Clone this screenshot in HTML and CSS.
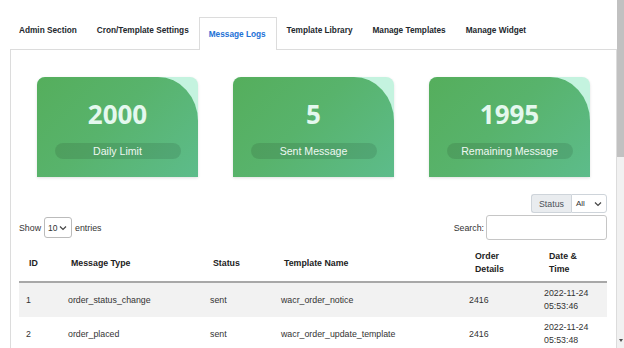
FILE: index.html
```html
<!DOCTYPE html>
<html lang="en">
<head>
<meta charset="utf-8">
<title>Message Logs</title>
<link rel="stylesheet" href="styles.css">
</head>
<body>
<div class="screen">
  <div class="page">
    <nav class="tabs">
      <a class="tab">Admin Section</a>
      <a class="tab">Cron/Template Settings</a>
      <a class="tab active">Message Logs</a>
      <a class="tab">Template Library</a>
      <a class="tab">Manage Templates</a>
      <a class="tab">Manage Widget</a>
    </nav>
    <section class="panel">
      <div class="cards">
        <div class="card"><div class="card-body"><div class="num">2000</div><div class="pill">Daily Limit</div></div></div>
        <div class="card"><div class="card-body"><div class="num">5</div><div class="pill">Sent Message</div></div></div>
        <div class="card"><div class="card-body"><div class="num">1995</div><div class="pill">Remaining Message</div></div></div>
      </div>
      <div class="logs">
        <div class="filter-row">
          <div class="input-group">
            <span class="addon">Status</span>
            <span class="select sel-all">All<svg class="chev" width="8" height="6" viewBox="0 0 8 6"><polyline points="1,1.5 4,4.5 7,1.5" fill="none" stroke="#444" stroke-width="1.2"/></svg></span>
          </div>
        </div>
        <div class="length-row">
          <div class="length">Show <span class="select sel-len">10<svg class="chev" width="8" height="6" viewBox="0 0 8 6"><polyline points="1,1.5 4,4.5 7,1.5" fill="none" stroke="#444" stroke-width="1.2"/></svg></span> entries</div>
          <div class="search">Search:<span class="search-input"></span></div>
        </div>
        <table class="log-table">
          <colgroup>
            <col class="c-id"><col class="c-type"><col class="c-status"><col class="c-tpl"><col class="c-order"><col class="c-date">
          </colgroup>
          <thead>
            <tr><th>ID</th><th>Message Type</th><th>Status</th><th>Template Name</th><th class="h-order">Order<br>Details</th><th class="h-date">Date &amp;<br>Time</th></tr>
          </thead>
          <tbody>
            <tr class="odd"><td>1</td><td>order_status_change</td><td>sent</td><td>wacr_order_notice</td><td>2416</td><td>2022-11-24<br>05:53:46</td></tr>
            <tr><td>2</td><td>order_placed</td><td>sent</td><td>wacr_order_update_template</td><td>2416</td><td>2022-11-24<br>05:53:48</td></tr>
          </tbody>
        </table>
      </div>
    </section>
  </div>
  <div class="scrollbar"><div class="thumb"></div><div class="track"></div><div class="arrow"></div></div>
</div>
</body>
</html>
```

FILE: styles.css
```css
html, body {
  margin: 0;
  padding: 0;
  background: #fff;
  overflow: hidden;
  height: 348px;
}
.screen {
  display: flex;
  width: 624px;
  height: 348px;
  overflow: hidden;
  font-family: "Liberation Sans", Arial, sans-serif;
  color: #333;
}
.page {
  width: 617px;
  flex: none;
}
.tabs {
  display: flex;
  align-items: stretch;
  height: 32px;
  padding: 17px 0 0 9px;
}
.tab {
  display: flex;
  align-items: center;
  padding: 0 10px 6px;
  font-size: 8.25px;
  font-weight: 700;
  color: #23282d;
  white-space: nowrap;
  position: relative;
  z-index: 1;
}
.tab.active {
  padding: 0 10px 0 9px;
  border: 1px solid #dcdcdc;
  border-bottom: 0;
  background: #fff;
  color: #2271d6;
  box-sizing: border-box;
  margin-bottom: -1px;
  height: 33px;
}
.panel {
  margin-left: 10px;
  border-top: 1px solid #dcdcdc;
  border-left: 1px solid #dcdcdc;
  border-right: 1px solid #dcdcdc;
  height: 320px;
}
.cards {
  display: flex;
  gap: 35px;
  padding: 27px 0 0 26px;
}
.card {
  width: 161px;
  height: 100px;
  background: #c4f3df;
  border-radius: 8px 8px 0 0;
  box-shadow: 0 1px 3px rgba(0, 0, 0, 0.12);
}
.card-body {
  height: 100%;
  box-sizing: border-box;
  border-radius: 8px 40px 0 0 / 8px 44px 0 0;
  background: linear-gradient(135deg, #55ae5c 0%, #58b36c 45%, #5dbc8b 100%);
  display: flex;
  flex-direction: column;
  align-items: center;
  padding-top: 24px;
}
.num {
  font-family: "Open Sans", sans-serif;
  font-weight: 700;
  font-size: 26px;
  line-height: 26px;
  color: #e4f8ee;
}
.pill {
  margin-top: 16px;
  width: 126px;
  height: 16px;
  border-radius: 8px;
  background: rgba(0, 0, 0, 0.1);
  color: #eef8f2;
  font-size: 10.6px;
  line-height: 16px;
  text-align: center;
}
.logs {
  padding: 17px 9px 0 8px;
  font-size: 8.8px;
}
.filter-row {
  display: flex;
  justify-content: flex-end;
}
.input-group {
  display: flex;
  height: 19px;
}
.addon {
  display: flex;
  align-items: center;
  padding: 0 7px;
  background: #e9ecef;
  border: 1px solid #ced4da;
  border-right: 0;
  border-radius: 3px 0 0 3px;
  color: #495057;
  box-sizing: border-box;
  width: 40px;
}
.select {
  display: flex;
  align-items: center;
  justify-content: space-between;
  box-sizing: border-box;
  border: 1px solid #b5b5b5;
  background: #fff;
  color: #333;
}
.sel-all {
  width: 36px;
  padding: 0 4px 0 4px;
  border-radius: 0 3px 3px 0;
  border-color: #ced4da;
  font-size: 8px;
}
.sel-len {
  width: 28px;
  height: 21px;
  padding: 0 4px 0 3px;
  border-radius: 3px;
  font-size: 8.5px;
  margin: 0 1px;
  border-color: #bbb;
}
.length-row {
  display: flex;
  justify-content: space-between;
  align-items: center;
  margin-top: 2px;
  height: 25px;
}
.length {
  display: flex;
  align-items: center;
  gap: 2px;
  color: #333;
}
.search {
  display: flex;
  align-items: center;
  color: #333;
}
.search-input {
  width: 121px;
  height: 25px;
  box-sizing: border-box;
  border: 1px solid #c6c6c6;
  border-radius: 3px;
  margin-left: 2px;
  background: #fff;
}
.log-table {
  margin-top: 5px;
  width: 588px;
  table-layout: fixed;
  border-collapse: collapse;
  font-size: 8.8px;
  line-height: 13px;
}
.c-id { width: 42px; }
.c-type { width: 142px; }
.c-status { width: 71px; }
.c-tpl { width: 188px; }
.c-order { width: 75px; }
.c-date { width: 70px; }
.log-table th {
  text-align: left;
  font-weight: 700;
  color: #222;
  padding: 5px 4px 5px 10px;
  height: 26px;
  vertical-align: middle;
  border-bottom: 2px solid #a8a8a8;
}
.log-table th.h-order {
  padding-left: 13px;
}
.log-table th.h-date {
  padding-left: 12px;
}
.log-table td {
  padding: 4px 4px 4px 7px;
  height: 26px;
  vertical-align: middle;
  color: #333;
  white-space: nowrap;
}
.log-table tr.odd td {
  background: #f2f2f2;
}
.scrollbar {
  width: 7px;
  flex: none;
  display: flex;
  flex-direction: column;
  background: #f1f1f1;
}
.thumb {
  height: 157px;
  background: #c1c1c1;
}
.track {
  flex: 1;
}
.arrow {
  align-self: center;
  width: 0;
  height: 0;
  border-left: 2px solid transparent;
  border-right: 2px solid transparent;
  border-top: 3px solid #505050;
  margin-bottom: 6px;
}
```
